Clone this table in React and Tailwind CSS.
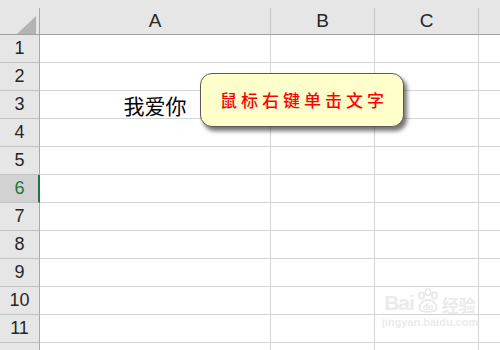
import React from "react";

const rows = [1, 2, 3, 4, 5, 6, 7, 8, 9, 10, 11, 12];

function HeaderCell({ label, w }) {
  return (
    <div className={`${w} h-[26px] shrink-0 border-r border-[#c6c6c6] flex items-center justify-center text-[19px] text-[#262626]`}>
      {label}
    </div>
  );
}

function Row({ n }) {
  const selected = n === 6;
  return (
    <div className="flex h-[28px] shrink-0">
      <div
        className={`w-[40px] h-[28px] shrink-0 flex items-center justify-center text-[18px] border-b border-[#c2c2c2] ${
          selected
            ? "bg-[#d2d2d2] text-[#217346] border-r-2 border-r-[#217346]"
            : "bg-[#e6e6e6] text-[#262626] border-r border-r-[#a8a8a8]"
        }`}
      >
        <span className={selected ? "pl-[1px]" : ""}>{n === 12 ? "" : n}</span>
      </div>
      <div className="w-[231px] shrink-0 border-r border-b border-[#d4d4d4] flex items-center justify-center">
        {n === 3 && (
          <span className="text-[21px] text-black pt-[3px]" style={{ fontFamily: '"Noto Sans CJK SC", sans-serif' }}>
            我爱你
          </span>
        )}
      </div>
      <div className="w-[104px] shrink-0 border-r border-b border-[#d4d4d4]" />
      <div className="w-[104px] shrink-0 border-r border-b border-[#d4d4d4]" />
      <div className="flex-1 border-b border-[#d4d4d4]" />
    </div>
  );
}

export default function App() {
  return (
    <div
      className="relative w-[500px] h-[350px] overflow-hidden bg-white flex flex-col"
      style={{ fontFamily: '"Liberation Sans", Arial, sans-serif' }}
    >
      {/* Column header */}
      <div className="flex h-[35px] shrink-0 pt-[8px] bg-[#e6e6e6] border-b border-[#9f9f9f]">
        <div className="w-[40px] h-[26px] shrink-0 border-r border-[#a8a8a8] flex items-end justify-end pr-[3px]">
          <svg width="19" height="18" viewBox="0 0 19 18">
            <polygon points="0,18 19,18 19,0" fill="#b3b3b3" />
          </svg>
        </div>
        <HeaderCell label="A" w="w-[231px]" />
        <HeaderCell label="B" w="w-[104px]" />
        <HeaderCell label="C" w="w-[104px]" />
        <div className="flex-1" />
      </div>

      {rows.map((n) => (
        <Row key={n} n={n} />
      ))}

      {/* Callout */}
      <div className="absolute left-[200px] top-[73px] w-[204px] h-[54px] rounded-[12px] border border-[#5a5a5a] bg-[#ffffcc] flex items-center justify-center shadow-[3px_4px_4px_rgba(0,0,0,0.55)]">
        <span
          className="text-[17px] font-medium text-[#ff0000] tracking-[4px] pl-[4px]"
          style={{ fontFamily: '"Noto Sans CJK SC", sans-serif' }}
        >
          鼠标右键单击文字
        </span>
      </div>

      {/* Watermark */}
      <div className="absolute left-[380px] top-[288px] w-[100px] flex flex-col items-center text-[#ebebeb] pointer-events-none">
        <div className="flex items-end gap-[2px] leading-none">
          <span className="text-[21px] font-bold tracking-[-1px]">Bai</span>
          <svg width="24" height="26" viewBox="0 0 22 24" className="-mb-[1px]">
            <g fill="none" stroke="#e8e8e8" strokeWidth="1.6">
              <ellipse cx="5" cy="7" rx="2.5" ry="3" />
              <ellipse cx="11" cy="4" rx="2.5" ry="3" />
              <ellipse cx="17" cy="7" rx="2.5" ry="3" />
              <path d="M3 19 C3 13 8 11 11 11 C14 11 19 13 19 19 C19 23 3 23 3 19 Z" />
            </g>
            <text x="11" y="20" fontSize="8" textAnchor="middle" fill="#e6e6e6" fontFamily="Liberation Sans" fontWeight="bold">du</text>
          </svg>
          <span className="text-[17px] font-bold" style={{ fontFamily: '"Noto Sans CJK SC", sans-serif' }}>经验</span>
        </div>
        <span className="text-[11px] leading-none mt-[4px] font-bold text-[#ebebeb]">jingyan.baidu.com</span>
      </div>
    </div>
  );
}
